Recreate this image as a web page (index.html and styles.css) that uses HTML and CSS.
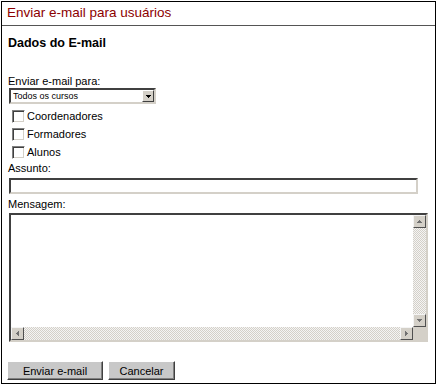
FILE: index.html
```html
<!DOCTYPE html>
<html lang="pt">
<head>
    <meta charset="UTF-8">
    <meta name="viewport" content="width=device-width, initial-scale=1.0">
    <title>Enviar e-mail para usuários</title>
    <link rel="stylesheet" href="styles.css">
</head>
<body>
    <div class="panel">
        <div class="title">Enviar e-mail para usuários</div>
        <form class="form">
            <h2 class="section">Dados do E-mail</h2>
            <label class="field-label" for="dest">Enviar e-mail para:</label>
            <div class="combo">
                <select id="dest">
                    <option>Todos os cursos</option>
                </select>
                <span class="combo-btn"></span>
            </div>
            <div class="checks">
                <label class="check"><input type="checkbox"> Coordenadores</label>
                <label class="check"><input type="checkbox"> Formadores</label>
                <label class="check"><input type="checkbox"> Alunos</label>
            </div>
            <label class="field-label" for="subject">Assunto:</label>
            <input type="text" id="subject" class="text">
            <label class="field-label" for="msg">Mensagem:</label>
            <div class="memo">
                <textarea id="msg"></textarea>
                <div class="vbar">
                    <span class="sb-btn arrow-up"></span>
                    <span class="sb-track"></span>
                    <span class="sb-btn arrow-down"></span>
                </div>
                <div class="hbar">
                    <span class="sb-btn arrow-left"></span>
                    <span class="sb-track"></span>
                    <span class="sb-btn arrow-right"></span>
                </div>
                <span class="sb-corner"></span>
            </div>
            <div class="actions">
                <button type="button" class="btn btn-send">Enviar e-mail</button>
                <button type="button" class="btn btn-cancel">Cancelar</button>
            </div>
        </form>
    </div>
</body>
</html>
```

FILE: styles.css
```css
body {
    margin: 0;
    padding: 1px 0 0 1px;
    background: #fff;
    font-family: "Liberation Sans", Arial, sans-serif;
    color: #000;
}
.panel {
    box-sizing: border-box;
    width: 435px;
    height: 383px;
    border: 1px solid #000;
    background: #fff;
}
.title {
    font-size: 13.5px;
    line-height: 16px;
    color: #8c0000;
    padding: 3px 5px 4px;
    border-bottom: 1px solid #555;
}
.form {
    padding: 0 6px;
    margin: 0;
}
.section {
    font-size: 12.5px;
    line-height: 15px;
    font-weight: bold;
    margin: 10px 0 23px;
}
.field-label {
    display: block;
    font-size: 11px;
    line-height: 14px;
}
.combo {
    box-sizing: border-box;
    display: flex;
    width: 147px;
    height: 16px;
    margin-left: 1px;
    border: 2px solid;
    border-color: #404040 #d4d0c8 #d4d0c8 #404040;
    background: #fff;
}
.combo select {
    flex: 1;
    min-width: 0;
    appearance: none;
    border: 0;
    outline: none;
    padding: 0 2px;
    margin: 0;
    height: 12px;
    font-family: "Liberation Sans", Arial, sans-serif;
    font-size: 9px;
    line-height: 12px;
    background: #fff;
    color: #000;
}
.combo-btn {
    box-sizing: border-box;
    width: 12px;
    height: 12px;
    border: 1px solid;
    border-color: #fff #404040 #404040 #fff;
    background: conic-gradient(from -45deg at 50% 100%, #000 90deg, transparent 0) center / 5px 3px no-repeat, #d4d0c8;
}
.checks {
    margin-top: 3px;
}
.check {
    display: flex;
    align-items: center;
    height: 18px;
    font-size: 11px;
    gap: 2px;
}
.check input {
    appearance: none;
    box-sizing: border-box;
    width: 13px;
    height: 13px;
    margin: 0 0 0 4px;
    border: 1px solid;
    border-color: #808080 #fff #fff #808080;
    box-shadow: inset 1px 1px #404040, inset -1px -1px #d4d0c8;
    background: #fff;
}
.text,
.memo {
    box-sizing: border-box;
    margin-left: 1px;
    border: 2px solid;
    border-color: #404040 #d4d0c8 #d4d0c8 #404040;
    background: #fff;
}
.text {
    display: block;
    width: 409px;
    height: 16px;
    margin-top: 3px;
    margin-bottom: 3px;
    padding: 0 2px;
    font-family: "Liberation Sans", Arial, sans-serif;
    font-size: 11px;
    outline: none;
}
.memo {
    display: grid;
    grid-template-columns: 1fr 13px;
    grid-template-rows: 1fr 13px;
    width: 419px;
    height: 129px;
    margin-top: 2px;
}
.memo textarea {
    border: 0;
    outline: none;
    resize: none;
    margin: 0;
    padding: 2px;
    min-width: 0;
    min-height: 0;
    font-family: "Liberation Sans", Arial, sans-serif;
    font-size: 11px;
    background: #fff;
}
.vbar {
    display: flex;
    flex-direction: column;
}
.hbar {
    display: flex;
}
.sb-track {
    flex: 1;
    background: repeating-conic-gradient(#d4d0c8 0 25%, #f4f4f4 0 50%) 0 0 / 2px 2px;
}
.sb-btn {
    box-sizing: border-box;
    flex: none;
    width: 13px;
    height: 13px;
    border: 1px solid;
    border-color: #f4f4f4 #505050 #505050 #f4f4f4;
    background-color: #d4d0c8;
    background-repeat: no-repeat;
    background-position: center;
}
.arrow-up {
    background-image: conic-gradient(from 135deg at 50% 0, #707070 90deg, transparent 0);
    background-size: 5px 3px;
}
.arrow-down {
    background-image: conic-gradient(from -45deg at 50% 100%, #707070 90deg, transparent 0);
    background-size: 5px 3px;
}
.arrow-left {
    background-image: conic-gradient(from 45deg at 0 50%, #707070 90deg, transparent 0);
    background-size: 3px 5px;
}
.arrow-right {
    background-image: conic-gradient(from 225deg at 100% 50%, #707070 90deg, transparent 0);
    background-size: 3px 5px;
}
.sb-corner {
    background: #d4d0c8;
}
.actions {
    display: flex;
    gap: 5px;
    margin: 19px 0 0 -1px;
}
.btn {
    box-sizing: border-box;
    height: 19px;
    padding: 0;
    border: 1px solid;
    border-color: #fff #404040 #404040 #fff;
    box-shadow: inset -1px -1px #808080;
    background: #c8c8c8;
    font-family: "Liberation Sans", Arial, sans-serif;
    font-size: 11px;
    color: #000;
}
.btn-send {
    width: 96px;
}
.btn-cancel {
    width: 67px;
}
```
